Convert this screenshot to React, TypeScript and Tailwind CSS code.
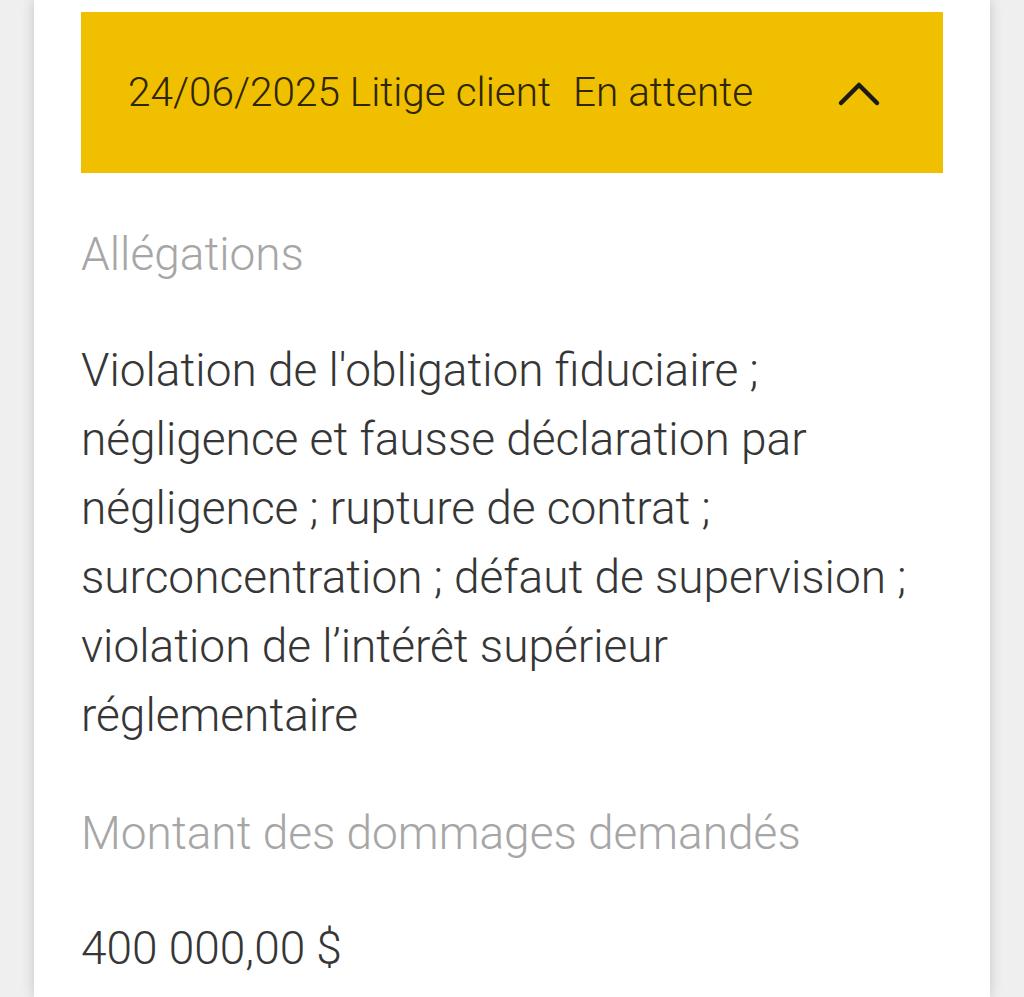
export default function App() {
  return (
    <div className="min-h-screen bg-[#efefef] px-[34px] font-['Roboto',sans-serif] font-light">
      <div className="min-h-[997px] bg-white px-[47px] pt-[12px] shadow-[0_0_12px_rgba(0,0,0,0.18)]">
        {/* Accordion header */}
        <div className="flex h-[161px] items-center justify-between bg-[#f0c000] pl-[47px] pr-[62px] text-[40.5px] text-[#2e2600]">
          <div className="flex items-center gap-[22px]">
            <span>24/06/2025 Litige client</span>
            <span>En attente</span>
          </div>
          <svg width="44" height="28" viewBox="0 0 44 28" fill="none">
            <path d="M4 24 L22 6 L40 24" stroke="#1a1a1a" strokeWidth="4.5" strokeLinecap="round" strokeLinejoin="round" />
          </svg>
        </div>

        {/* Details */}
        <div className="pt-[47px] text-[46px] leading-[69px]">
          <div className="text-[#a6a6a6]">Allégations</div>
          <p className="mt-[47px] text-[#363636]">
            Violation de l'obligation fiduciaire ; négligence et fausse déclaration par négligence ; rupture de contrat ; surconcentration ; défaut de supervision ; violation de l’intérêt supérieur réglementaire
          </p>
          <div className="mt-[49px] text-[#a6a6a6]">Montant des dommages demandés</div>
          <div className="mt-[46px] text-[#363636]">400 000,00 $</div>
        </div>
      </div>
    </div>
  );
}
